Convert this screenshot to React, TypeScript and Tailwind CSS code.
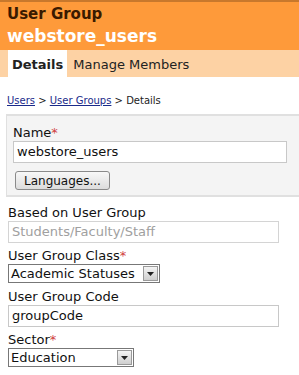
export default function App() {
  const font = { fontFamily: '"DejaVu Sans", Verdana, sans-serif' };
  return (
    <div className="w-[299px] h-[375px] bg-white overflow-hidden text-[13px] text-[#111]" style={font}>
      {/* Header */}
      <div className="bg-[#fe9a3a] border-t-2 border-[#c8782c] px-[7px] pt-[3px] h-[50px]">
        <div className="text-[15px] font-bold text-[#3a1a00] leading-[19px]">User Group</div>
        <div className="text-[17px] font-bold text-white leading-[24px]">webstore_users</div>
      </div>

      {/* Tabs */}
      <div className="bg-[#fdd2a4] h-[27px] flex items-end pl-[8px]">
        <div className="bg-white h-[27px] px-[4px] pt-[3px] flex items-center font-bold text-[#222]">Details</div>
        <div className="h-[27px] px-[6px] pt-[3px] flex items-center text-[#222]">Manage Members</div>
      </div>

      {/* Breadcrumb */}
      <div className="px-[7px] pt-[16px] h-[37px] text-[10px] text-[#222]">
        <span className="underline text-[#1a2a8a]">Users</span>
        <span> &gt; </span>
        <span className="underline text-[#1a2a8a]">User Groups</span>
        <span> &gt; Details</span>
      </div>

      {/* Name panel */}
      <div className="ml-[6px] bg-[#f4f4f4] border-t-2 border-b-2 border-l border-[#e0e0e0] h-[83px] px-[6px] pt-[9px]">
        <div className="leading-[16px]">
          Name<span className="text-[#d04040]">*</span>
        </div>
        <div className="w-[274px] h-[22px] bg-white border border-[#c8c8c8] flex items-center px-[3px]">
          webstore_users
        </div>
        <div className="mt-[8px] ml-[2px] inline-flex items-center h-[19px] px-[8px] rounded-[3px] border border-[#8a8a8a] bg-gradient-to-b from-[#f8f8f8] to-[#dcdcdc] text-[12px]">
          Languages...
        </div>
      </div>

      {/* Fields */}
      <div className="px-[8px] pt-[8px] flex flex-col">
        <div className="leading-[16px]">Based on User Group</div>
        <div className="w-[271px] h-[22px] bg-white border border-[#d4d4d4] flex items-center px-[3px] text-[#a0a0a0]">
          Students/Faculty/Staff
        </div>

        <div className="mt-[5px] leading-[16px]">
          User Group Class<span className="text-[#d04040]">*</span>
        </div>
        <div className="w-[152px] h-[19px] bg-white border border-[#777] flex items-center">
          <span className="flex-1 pl-[2px]">Academic Statuses</span>
          <SelectArrow />
        </div>

        <div className="mt-[6px] leading-[16px]">User Group Code</div>
        <div className="w-[271px] h-[22px] bg-white border border-[#c8c8c8] flex items-center px-[3px]">
          groupCode
        </div>

        <div className="mt-[5px] leading-[16px]">
          Sector<span className="text-[#d04040]">*</span>
        </div>
        <div className="w-[126px] h-[19px] bg-white border border-[#777] flex items-center">
          <span className="flex-1 pl-[2px]">Education</span>
          <SelectArrow />
        </div>
      </div>
    </div>
  );
}

function SelectArrow() {
  return (
    <div className="w-[15px] h-[15px] mr-[1px] border border-[#9a9a9a] bg-gradient-to-b from-[#f4f4f4] to-[#cfcfcf] flex items-center justify-center">
      <svg width="7" height="4" viewBox="0 0 7 4">
        <path d="M0 0h7L3.5 4z" fill="#222" />
      </svg>
    </div>
  );
}
